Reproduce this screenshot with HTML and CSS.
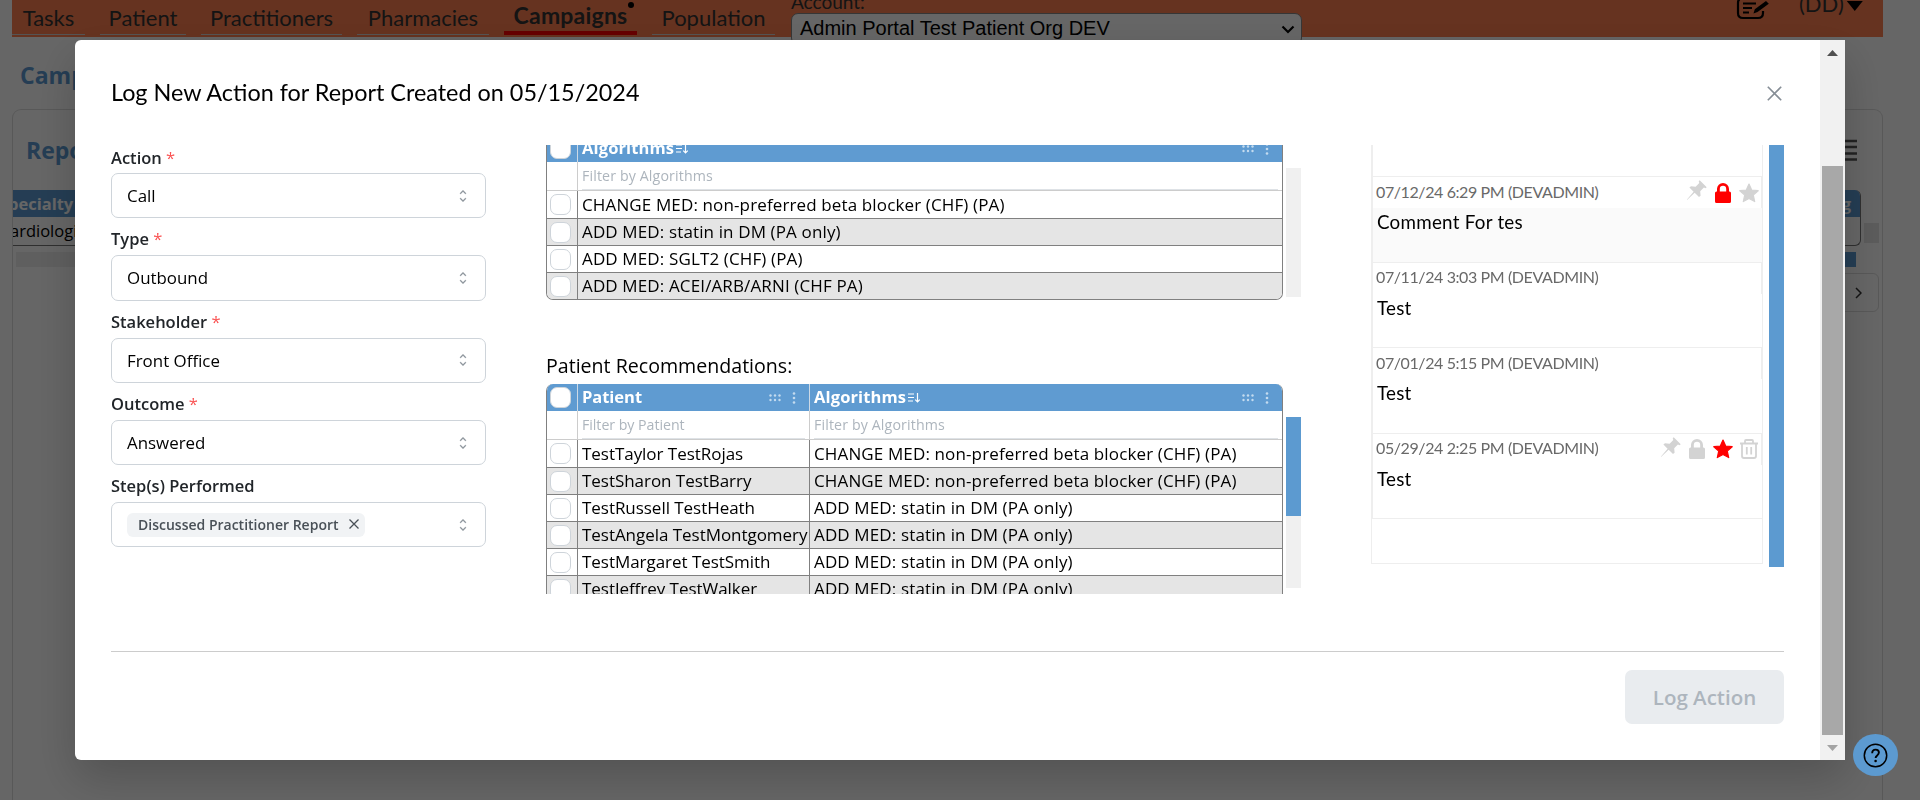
FILE: index.html
```html
<!DOCTYPE html>
<html lang="en">
<head>
<meta charset="utf-8">
<title>Campaigns</title>
<link rel="stylesheet" href="styles.css">
</head>
<body>
<svg class="defs" width="0" height="0" aria-hidden="true">
  <symbol id="updown" viewBox="0 0 15 15"><path fill="currentColor" d="M4.93 5.43a.45.45 0 0 1-.02-.64l2.26-2.4a.45.45 0 0 1 .66 0l2.26 2.4a.45.45 0 1 1-.66.62L7.5 3.36 5.57 5.41a.45.45 0 0 1-.64.02Zm0 4.14a.45.45 0 0 1 .64.02L7.5 11.64l1.93-2.05a.45.45 0 0 1 .66.62l-2.26 2.4a.45.45 0 0 1-.66 0l-2.26-2.4a.45.45 0 0 1 .02-.64Z" stroke="currentColor" stroke-width=".3"/></symbol>
  <symbol id="sort" viewBox="0 0 13 12"><path d="M0 2h6M0 5.500h6M0 9h5M9.500 1v9M7.200 7.600 9.500 10l2.300-2.400" fill="none" stroke="currentColor" stroke-width="1.200"/></symbol>
  <symbol id="grip" viewBox="0 0 12 8"><g fill="currentColor"><circle cx="1.500" cy="1.500" r="1.200"/><circle cx="6" cy="1.500" r="1.200"/><circle cx="10.500" cy="1.500" r="1.200"/><circle cx="1.500" cy="6" r="1.200"/><circle cx="6" cy="6" r="1.200"/><circle cx="10.500" cy="6" r="1.200"/></g></symbol>
  <symbol id="dots" viewBox="0 0 4 12"><g fill="currentColor"><circle cx="2" cy="1.500" r="1.300"/><circle cx="2" cy="6" r="1.300"/><circle cx="2" cy="10.500" r="1.300"/></g></symbol>
  <symbol id="pin" viewBox="0 0 20 20"><path fill="currentColor" d="M12.700.300 19.700 7.300 18.600 8.300 16.900 7.600 13.200 11.300 13.600 15.800 12 17 7.700 12.800 0 20 0 19.600 6.600 11.700 2.400 7.500 4 6.200 8.600 6.700 12.300 3.100 11.700 1.300Z"/></symbol>
  <symbol id="lock" viewBox="0 0 18 20"><path fill="currentColor" d="M3 8.500V6a6 6 0 0 1 12 0v2.500h.5A1.500 1.500 0 0 1 17 10v8.500a1.500 1.500 0 0 1-1.500 1.500h-13A1.500 1.500 0 0 1 1 18.500V10a1.500 1.500 0 0 1 1.500-1.500Zm2.800 0h6.400V6a3.200 3.200 0 0 0-6.400 0Z"/></symbol>
  <symbol id="star" viewBox="0 0 20 20"><path fill="currentColor" stroke="currentColor" stroke-width="1.200" stroke-linejoin="round" d="m10 1 2.700 6 6.500.700-4.900 4.400 1.400 6.500L10 15.400l-5.700 3.200 1.400-6.500L.8 7.700 7.300 7Z"/></symbol>
  <symbol id="trash" viewBox="0 0 20 20"><path fill="none" stroke="currentColor" stroke-width="1.800" d="M1 4.500h18M6 4.300V2q0-1 1-1h6q1 0 1 1v2.300M3 4.500V17q0 2 2 2h10q2 0 2-2V4.500M7.800 8v7.500M12.200 8v7.500"/></symbol>
</svg>

<div class="page">
  <header class="topbar">
    <nav class="nav">
      <a class="nav-item tasks">Tasks</a>
      <a class="nav-item patient">Patient</a>
      <a class="nav-item practitioners">Practitioners</a>
      <a class="nav-item pharmacies">Pharmacies</a>
      <a class="nav-item campaigns active">Campaigns<i class="badge"></i></a>
      <a class="nav-item population">Population</a>
    </nav>
    <div class="account">
      <span class="account-label">Account:</span>
      <div class="account-select"><span>Admin Portal Test Patient Org DEV</span>
        <svg width="14" height="9" viewBox="0 0 14 9"><path d="m1.500 1.500 5.500 5.500 5.500-5.500" fill="none" stroke="#000" stroke-width="2.200"/></svg></div>
    </div>
    <svg class="note" width="34" height="24" viewBox="0 0 34 24"><g fill="none" stroke="#000" stroke-width="2.200"><path d="M23 2H7Q2 2 2 7v10q0 5 5 5h15q5 0 5-5v-2"/><path d="M7 7.500h13M7 12h9M7 16.500h6"/></g><path d="m17.500 17.500 1.300-4.300L30 5l2.800 2.800L21.500 16Z" fill="#000"/></svg>
    <div class="user"><span>(DD)</span><i class="caret"></i></div>
  </header>
  <h1 class="page-title">Campaigns</h1>
  <section class="card">
    <div class="card-head"><h2>Reports</h2>
      <svg width="13" height="23" viewBox="0 0 13 23"><path d="M0 2h13M0 8h13M0 14.500h13M0 20.500h13" stroke="#555" stroke-width="2.600"/></svg></div>
    <div class="bg-table">
      <div class="bg-grid">
        <div class="bg-th"><span>pecialty</span><span>g</span></div>
        <div class="bg-td">ardiologist</div>
      </div>
      <i class="bg-vbar"></i>
    </div>
    <div class="bg-hbar"><i></i></div>
    <div class="bg-pager"><svg width="7" height="12" viewBox="0 0 7 12"><path d="m1 1 5 5-5 5" fill="none" stroke="#333" stroke-width="1.500"/></svg></div>
  </section>
</div>

<div class="overlay">
  <div class="modal">
    <div class="modal-body">
      <div class="modal-head"><span class="modal-title">Log New Action for Report Created on 05/15/2024</span>
        <svg width="15" height="15" viewBox="0 0 15 15"><path d="m.8.8 13.400 13.400M14.200.8.8 14.200" stroke="#868e96" stroke-width="1.600"/></svg></div>
      <div class="columns">
        <form class="form">
          <label>Action <b>*</b></label>
          <div class="select"><span>Call</span><svg class="ud"><use href="#updown"/></svg></div>
          <label>Type <b>*</b></label>
          <div class="select"><span>Outbound</span><svg class="ud"><use href="#updown"/></svg></div>
          <label>Stakeholder <b>*</b></label>
          <div class="select"><span>Front Office</span><svg class="ud"><use href="#updown"/></svg></div>
          <label>Outcome <b>*</b></label>
          <div class="select"><span>Answered</span><svg class="ud"><use href="#updown"/></svg></div>
          <label>Step(s) Performed</label>
          <div class="select"><span class="chip">Discussed Practitioner Report<svg width="10" height="10" viewBox="0 0 10 10"><path d="m.5.5 9 9M9.500.5l-9 9" stroke="#495057" stroke-width="1.300"/></svg></span><svg class="ud"><use href="#updown"/></svg></div>
        </form>

        <div class="tables">
          <div class="table-wrap first">
            <div class="table one">
              <div class="tr th"><div><i class="check"></i></div><div><span>Algorithms</span><svg class="sort"><use href="#sort"/></svg><svg class="grip"><use href="#grip"/></svg><svg class="dots"><use href="#dots"/></svg></div></div>
              <div class="tr filter"><div></div><div><span>Filter by Algorithms</span></div></div>
              <div class="tr"><div><i class="check"></i></div><div>CHANGE MED: non-preferred beta blocker (CHF) (PA)</div></div>
              <div class="tr alt"><div><i class="check"></i></div><div>ADD MED: statin in DM (PA only)</div></div>
              <div class="tr"><div><i class="check"></i></div><div>ADD MED: SGLT2 (CHF) (PA)</div></div>
              <div class="tr alt"><div><i class="check"></i></div><div>ADD MED: ACEI/ARB/ARNI (CHF PA)</div></div>
            </div>
            <div class="track"></div>
          </div>
          <div class="tables-title">Patient Recommendations:</div>
          <div class="table-wrap second">
            <div class="table two">
              <div class="tr th"><div><i class="check"></i></div><div><span>Patient</span><svg class="grip"><use href="#grip"/></svg><svg class="dots"><use href="#dots"/></svg></div><div><span>Algorithms</span><svg class="sort"><use href="#sort"/></svg><svg class="grip"><use href="#grip"/></svg><svg class="dots"><use href="#dots"/></svg></div></div>
              <div class="tr filter"><div></div><div><span>Filter by Patient</span></div><div><span>Filter by Algorithms</span></div></div>
              <div class="tr"><div><i class="check"></i></div><div>TestTaylor TestRojas</div><div>CHANGE MED: non-preferred beta blocker (CHF) (PA)</div></div>
              <div class="tr alt"><div><i class="check"></i></div><div>TestSharon TestBarry</div><div>CHANGE MED: non-preferred beta blocker (CHF) (PA)</div></div>
              <div class="tr"><div><i class="check"></i></div><div>TestRussell TestHeath</div><div>ADD MED: statin in DM (PA only)</div></div>
              <div class="tr alt"><div><i class="check"></i></div><div>TestAngela TestMontgomery</div><div>ADD MED: statin in DM (PA only)</div></div>
              <div class="tr"><div><i class="check"></i></div><div>TestMargaret TestSmith</div><div>ADD MED: statin in DM (PA only)</div></div>
              <div class="tr alt"><div><i class="check"></i></div><div>TestJeffrey TestWalker</div><div>ADD MED: statin in DM (PA only)</div></div>
            </div>
            <div class="track"><i></i></div>
          </div>
        </div>

        <div class="comments">
          <div class="comment-list">
            <div class="comment spacer"></div>
            <div class="comment shaded"><div class="meta"><span>07/12/24 6:29 PM (DEVADMIN)</span><svg class="pin"><use href="#pin"/></svg><svg class="red"><use href="#lock"/></svg><svg><use href="#star"/></svg></div><p class="text">Comment For tes</p></div>
            <div class="comment"><div class="meta"><span>07/11/24 3:03 PM (DEVADMIN)</span></div><p class="text">Test</p></div>
            <div class="comment"><div class="meta"><span>07/01/24 5:15 PM (DEVADMIN)</span></div><p class="text">Test</p></div>
            <div class="comment"><div class="meta"><span>05/29/24 2:25 PM (DEVADMIN)</span><svg class="pin"><use href="#pin"/></svg><svg><use href="#lock"/></svg><svg class="red"><use href="#star"/></svg><svg><use href="#trash"/></svg></div><p class="text">Test</p></div>
            <div class="rest"></div>
          </div>
          <i class="comment-bar"></i>
        </div>
      </div>
      <div class="modal-foot"><button class="log" disabled>Log Action</button></div>
    </div>
    <div class="scrollbar">
      <svg width="11" height="6" viewBox="0 0 11 6"><path d="M0 6 5.500 0 11 6Z" fill="#505050"/></svg>
      <i></i>
      <svg width="11" height="6" viewBox="0 0 11 6"><path d="M0 0 5.500 6 11 0Z" fill="#a3a3a3"/></svg>
    </div>
  </div>
</div>
<div class="help"><svg width="25" height="25" viewBox="0 0 25 25"><circle cx="12.500" cy="12.500" r="11.200" fill="none" stroke="#000" stroke-width="1.500"/><path d="M9.200 10.200q0-3.600 3.400-3.600 3.300 0 3.300 3 0 1.500-1.700 2.800-1.600 1.200-1.600 2.700" fill="none" stroke="#000" stroke-width="1.900"/><circle cx="12.600" cy="18" r="1.300"/></svg></div>
</body>
</html>
```
FILE: styles.css
```css
* { box-sizing: border-box; }
html, body { height: 100%; }
body {
  margin: 0;
  overflow: hidden;
  background: #fff;
  color: #000;
  font-family: "Open Sans", "Noto Sans", sans-serif;
}
i, b { font-style: normal; font-weight: inherit; }
h1, h2, p { margin: 0; }
.defs { display: block; }

/* Page behind the dialog */
.page { display: flex; flex-direction: column; height: 800px; padding: 0 37px 0 12px; overflow: hidden; }
.topbar {
  display: flex;
  align-items: flex-start;
  flex: none;
  height: 37px;
  background: coral;
  font-family: Lato, sans-serif;
  font-size: 22px;
  color: #333;
}
.nav { display: flex; gap: 15px; width: 779px; flex: none; }
.nav-item {
  flex: none;
  height: 35px;
  border-bottom: 1px solid #d3d3d3;
  text-align: center;
  line-height: 35px;
  white-space: nowrap;
}
.tasks { width: 73px; }
.patient { width: 86px; }
.practitioners { width: 141px; }
.pharmacies { width: 132px; }
.campaigns { width: 133px; }
.population { width: 123px; }
.active { position: relative; font-weight: 700; font-size: 23px; letter-spacing: .2px; line-height: 31px; border-bottom: 4px solid red; }
.badge { position: absolute; right: 3px; top: 2px; width: 6px; height: 6px; border-radius: 50%; background: #000; }
.account { width: 511px; flex: none; height: 37px; }
.account-label { display: block; height: 13px; line-height: 3px; font-size: 19px; }
.account-select {
  display: flex;
  justify-content: space-between;
  align-items: center;
  height: 32px;
  padding: 0 6px 0 8px;
  border: 1px solid #888;
  border-radius: 7px;
  background: #fff;
  color: #000;
  font: 20px/30px "Liberation Sans", Arial, sans-serif;
}
.account-select span { padding-bottom: 2px; }
.note { margin: -4px 29px 0 434px; flex: none; }
.user { display: flex; line-height: 8px; gap: 3px; }
.caret { width: 16px; height: 10px; margin-top: 1px; background: #000; clip-path: polygon(0 0, 100% 0, 50% 100%); }
.page-title { padding-left: 8px; margin-top: 20px; height: 52px; font-size: 23px; line-height: 36px; color: #5c9ad2; }
.card { flex: 1; border: 1px solid #ddd; border-bottom: 0; border-radius: 9px 9px 0 0; }
.card-head { display: flex; justify-content: space-between; height: 80px; padding: 29px 25px 0 13px; }
.card-head h2 { font-size: 23px; line-height: 22px; color: #5c9ad2; }
.bg-table { display: flex; align-items: center; gap: 3px; }
.bg-grid { width: 1848px; border: 1px solid #777; border-left: 0; border-top: 0; border-radius: 0 6px 6px 0; overflow: hidden; font-size: 16.500px; line-height: 27px; }
.bg-th { display: flex; justify-content: space-between; background: #5c9ad2; color: #fff; font-weight: 700; padding: 0 9px 0 0; }
.bg-th span:first-child { margin-left: -5px; }
.bg-td { height: 28px; margin-left: -3px; line-height: 28px; }
.bg-vbar { width: 15px; height: 20px; background: #e5e5e5; margin-top: 30px; }
.bg-hbar { height: 15px; margin: 6px 26px 0 3px; background: #eee; display: flex; justify-content: flex-end; }
.bg-hbar i { width: 900px; background: #5c9ad2; }
.bg-pager { width: 70px; height: 39px; margin: 6px 3px 0 auto; padding-right: 16px; border: 1px solid #ddd; border-radius: 6px; display: flex; align-items: center; justify-content: flex-end; }

/* Dialog */
.overlay { position: fixed; inset: 0; padding: 40px 75px; background: rgba(0, 0, 0, .6); }
.modal {
  display: flex;
  width: 1770px;
  height: 720px;
  overflow: hidden;
  border-radius: 6px 0 0 6px;
  background: #fff;
  box-shadow: 0 18px 45px rgba(0, 0, 0, .2);
}
.modal-body { width: 1745px; padding: 0 36px; }
.modal-head { display: flex; justify-content: space-between; align-items: center; height: 105px; padding-right: 2px; }
.modal-head svg { margin-top: 1px; }
.modal-title { padding-bottom: 2px; font-family: Lato, sans-serif; font-size: 23.400px; }
.columns { display: flex; height: 449px; overflow: hidden; }

.form { width: 375px; margin-right: 60px; flex: none; }
.form label { display: block; height: 37px; padding-top: 9px; line-height: 24px; font-size: 16.500px; font-weight: 600; color: #212529; white-space: pre; }
.form label:first-child { height: 28px; padding-top: 0; line-height: 26px; }
.form label b { color: #fa5252; font-weight: 400; }
.select {
  display: flex;
  align-items: center;
  justify-content: space-between;
  height: 45.300px;
  padding: 0 14px 0 15px;
  border: 1px solid #ced4da;
  border-radius: 7px;
  font-size: 16.900px;
}
.ud { width: 16px; height: 16px; color: #868e96; }
.chip {
  display: flex;
  align-items: center;
  gap: 10px;
  height: 24px;
  padding: 0 6px 1px 11px;
  border-radius: 6px;
  background: #f1f3f5;
  color: #495057;
  font-size: 14px;
  font-weight: 600;
}

.tables { width: 755px; margin-right: 70px; flex: none; }
.table-wrap { display: flex; gap: 3px; }
.first { margin-top: -10px; }
.table {
  width: 737px;
  flex: none;
  border: 1px solid #808080;
  border-top: 0;
  border-radius: 7px;
  overflow: hidden;
  font-size: 17px;
}
.tr { display: grid; height: 27px; border-top: 1px solid #808080; line-height: 26px; background: #fff; }
.one .tr { grid-template-columns: 30px 1fr; }
.two .tr { grid-template-columns: 30px 232px 1fr; }
.tr > div { display: flex; padding-left: 4px; border-left: 1px solid #808080; white-space: nowrap; overflow: hidden; letter-spacing: -.04px; }
.tr > div:last-child { letter-spacing: .13px; }
.tr > div:first-child { align-items: center; padding-left: 3px; border-left: 0; }
.alt { background: #e5e5e5; }
.th { border-top: 0; background: #5f9bd1; color: #fff; font-weight: 700; align-items: stretch; font-size: 16.500px; }
.th > div { align-items: center; border-left-color: #ccd9e6; }
.th > div span { padding-bottom: 1px; }
.filter { height: 28px; border-top: 0; color: #adb5bd; font-size: 14.200px; line-height: 28px; }
.filter > div { padding-right: 4px; border-left-color: #ccc; }
.filter span { flex: 1; border-bottom: 1px solid #dee2e6; }
.filter + .tr { height: 28px; border-top-color: #ccc; line-height: 27px; }
.check { width: 21px; height: 21px; border: 1px solid #ced4da; border-radius: 7px; background: #fff; }
.sort { width: 13px; height: 12px; margin-left: 2px; }
.grip { width: 12px; height: 8px; margin-left: auto; color: #c4dbef; }
.dots { width: 4px; height: 12px; margin: 0 13px 0 11px; color: #c4dbef; }
.track { width: 15px; background: #f0f0f0; }
.track i { display: block; height: 99px; background: #5c9ad0; }
.first .track { height: 129px; margin-top: 33px; }
.second .track { height: 171px; margin-top: 33px; }
.tables-title { height: 84px; padding-top: 52px; font-size: 19.600px; line-height: 27px; }

.comments { display: flex; align-items: flex-start; gap: 6px; flex: none; font-family: Lato, sans-serif; }
.comment-list { width: 392px; height: 419px; border-left: 1px solid #eee; }
.comment { height: 85.500px; border: 1px solid #eee; border-top: 0; }
.spacer { height: 32px; }
.shaded { background: #fafafa; }
.meta { display: flex; align-items: center; gap: 6px; height: 31px; padding: 0 2px 0 3px; border-right: 1px solid #eee; background: #fff; color: #696969; font-size: 16px; letter-spacing: -.4px; }
.meta span { margin-right: auto; padding-bottom: 3px; }
.meta svg { width: 20px; height: 20px; color: #d3d3d3; }
.meta .pin { margin-top: -5px; }
.meta .red { color: red; }
.text { padding: 0 4px; font-size: 18.800px; letter-spacing: .25px; line-height: 27px; }
.rest { width: 391px; height: 45px; border: 1px solid #eee; border-top: 0; border-left: 0; }
.comment-bar { width: 15px; height: 422px; background: #5c9ad0; }

.modal-foot { display: flex; justify-content: flex-end; margin-top: 57px; padding-top: 18px; border-top: 1px solid #ccc; }
.log { width: 159px; height: 54px; border: 0; border-radius: 7px; background: #e9ecef; color: #adb5bd; font: 600 20.500px "Open Sans", sans-serif; }

.scrollbar { display: flex; flex-direction: column; align-items: center; width: 25px; background: #f1f1f1; padding: 10px 0 9px; }
.scrollbar i { width: 21px; height: 569px; margin: 110px 0 10px; background: #a8a8a8; }
.help {
  position: fixed;
  left: 1853px;
  top: 734px;
  display: flex;
  align-items: center;
  justify-content: center;
  width: 45px;
  height: 42px;
  border-radius: 50%;
  background: #5c9ad0;
}
```
